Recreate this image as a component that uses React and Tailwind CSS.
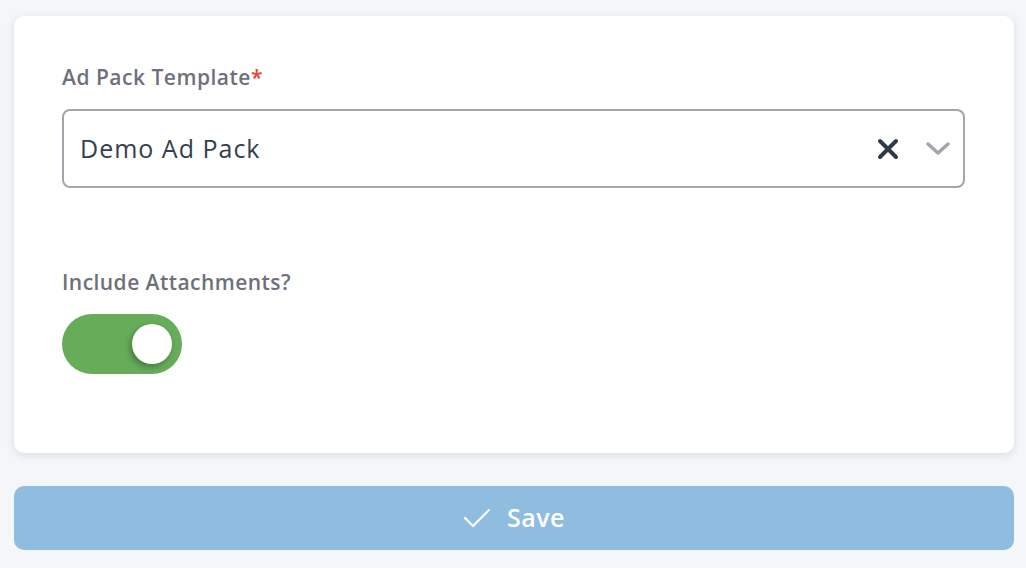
export default function App() {
  return (
    <div className="min-h-[568px] w-full bg-[#f4f6fa] px-[14px] pt-[16px]" style={{ fontFamily: "'Open Sans', sans-serif" }}>
      <div className="w-[1000px] rounded-[10px] bg-white pl-[48px] pr-[48px] pt-[47px] pb-[79px] shadow-[0_2px_8px_rgba(30,40,60,0.12)]">
        <div className="text-[21px] leading-[28px] font-semibold tracking-[0.5px] text-[#6e717b]">
          Ad Pack Template<span className="text-[#e0453a]">*</span>
        </div>
        <div className="mt-[18px] flex h-[79px] w-[903px] items-center rounded-[8px] border-2 border-[#a3a6ae] pl-[16px] pr-[12px]">
          <span className="flex-1 text-[25px] tracking-[1px] text-[#34404f]">Demo Ad Pack</span>
          <svg width="22" height="22" viewBox="0 0 22 22" className="mr-[26px]">
            <path d="M3 3 L19 19 M19 3 L3 19" stroke="#2f3a4a" strokeWidth="4" strokeLinecap="round" />
          </svg>
          <svg width="26" height="16" viewBox="0 0 26 16">
            <path d="M3 3 L13 12 L23 3" stroke="#a3a6ae" strokeWidth="3.5" fill="none" strokeLinecap="round" strokeLinejoin="round" />
          </svg>
        </div>
        <div className="mt-[80px] text-[21px] leading-[28px] font-semibold tracking-[0.45px] text-[#6e717b]">
          Include Attachments?
        </div>
        <div className="mt-[18px] flex h-[60px] w-[120px] items-center justify-end rounded-full bg-[#66ad5a] pr-[10px]">
          <div className="h-[40px] w-[40px] rounded-full bg-white shadow-[-2px_3px_6px_rgba(0,0,0,0.3)]" />
        </div>
      </div>
      <button className="mt-[33px] flex h-[64px] w-[1000px] items-center justify-center gap-[16px] rounded-[10px] bg-[#8fbddf] text-white">
        <svg width="28" height="22" viewBox="0 0 28 22">
          <path d="M2 11 L10 19 L26 3" stroke="white" strokeWidth="2.2" fill="none" strokeLinecap="round" strokeLinejoin="round" />
        </svg>
        <span className="text-[25px] font-semibold tracking-[0.5px]">Save</span>
      </button>
    </div>
  );
}
